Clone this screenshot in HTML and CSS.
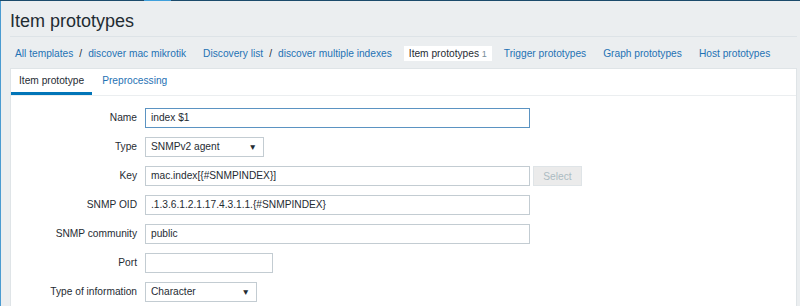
FILE: index.html
```html
<!DOCTYPE html>
<html lang="en">
<head>
  <meta charset="UTF-8">
  <meta name="viewport" content="width=device-width, initial-scale=1.0">
  <title>Item prototypes</title>
  <link rel="stylesheet" href="styles.css">
</head>
<body>
  <div class="topbar"><span class="topbar-mark"></span></div>

  <div class="page">
    <div class="header">
      <h1>Item prototypes</h1>
    </div>

    <ul class="breadcrumbs">
      <li><a href="#">All templates</a><span class="sep">/</span><a href="#">discover mac mikrotik</a></li>
      <li><a href="#">Discovery list</a><span class="sep">/</span><a href="#">discover multiple indexes</a></li>
      <li class="selected">Item prototypes <sup>1</sup></li>
      <li><a href="#">Trigger prototypes</a></li>
      <li><a href="#">Graph prototypes</a></li>
      <li><a href="#">Host prototypes</a></li>
    </ul>

    <div class="card">
      <ul class="tabs">
        <li class="active">Item prototype</li>
        <li><a href="#">Preprocessing</a></li>
      </ul>

      <div class="form">
        <label>Name</label>
        <div class="field"><div class="input focused w-wide">index $1</div></div>

        <label>Type</label>
        <div class="field"><div class="select w-type">SNMPv2 agent<span class="arrow">▼</span></div></div>

        <label>Key</label>
        <div class="field">
          <div class="input w-wide">mac.index[{#SNMPINDEX}]</div>
          <button class="btn-disabled">Select</button>
        </div>

        <label>SNMP OID</label>
        <div class="field"><div class="input w-wide">.1.3.6.1.2.1.17.4.3.1.1.{#SNMPINDEX}</div></div>

        <label>SNMP community</label>
        <div class="field"><div class="input w-wide">public</div></div>

        <label>Port</label>
        <div class="field"><div class="input w-port"></div></div>

        <label>Type of information</label>
        <div class="field"><div class="select w-info">Character<span class="arrow">▼</span></div></div>
      </div>
    </div>
  </div>
</body>
</html>
```

FILE: styles.css
```css
body {
  margin: 0;
  background-color: #ebeef0;
  font-family: "Liberation Sans", Arial, sans-serif;
  font-size: 10.2px;
  color: #1f2c33;
}

a {
  color: #1f72b4;
  text-decoration: none;
}

.topbar {
  height: 1px;
  background-color: #1b4a6b;
}

.topbar-mark {
  display: block;
  width: 27px;
  height: 1px;
  margin-left: 144px;
  background-color: #3fa0dc;
}

.page {
  border-left: 1px solid #4a9bd1;
  padding: 0 3px 0 9px;
  min-height: 305px;
}

.header {
  height: 35px;
  border-bottom: 1px solid #dde3e7;
}

.header h1 {
  margin: 0;
  padding-top: 9px;
  font-size: 18px;
  line-height: 22px;
  font-weight: normal;
  color: #1f2c33;
}

.breadcrumbs {
  list-style: none;
  display: flex;
  gap: 7px;
  margin: 0;
  padding: 9px 0 7px;
}

.breadcrumbs li {
  padding: 0 5px;
  height: 15px;
  line-height: 15px;
}

.breadcrumbs .sep {
  padding: 0 6px;
  color: #1f2c33;
}

.breadcrumbs .selected {
  background-color: #fff;
}

.breadcrumbs sup {
  font-size: 9px;
  color: #768d99;
  vertical-align: baseline;
}

.card {
  background-color: #fff;
  border: 1px solid #dfe4e7;
  min-height: 240px;
}

.tabs {
  list-style: none;
  display: flex;
  gap: 2px;
  margin: 0;
  padding: 0;
  border-bottom: 1px solid #ebeef0;
}

.tabs li {
  padding: 6px 8px 5px;
  line-height: 12px;
  border-bottom: 3px solid transparent;
}

.tabs .active {
  border-bottom-color: #0275b8;
}

.form {
  display: grid;
  grid-template-columns: 126px 1fr;
  column-gap: 8px;
  row-gap: 9px;
  padding: 12px 0 20px;
}

.form label {
  text-align: right;
  line-height: 20px;
}

.field {
  display: flex;
  gap: 3px;
}

.input,
.select {
  box-sizing: border-box;
  height: 20px;
  line-height: 18px;
  padding: 0 5px;
  border: 1px solid #c3ccd2;
  color: #1f2c33;
}

.input.focused {
  border-color: #5b93c2;
}

.select {
  display: flex;
  justify-content: space-between;
  padding-right: 6px;
}

.arrow {
  font-size: 8.5px;
}

.w-wide { width: 385px; }
.w-type { width: 119px; }
.w-port { width: 128px; }
.w-info { width: 112px; }

.btn-disabled {
  width: 49px;
  height: 20px;
  padding: 0;
  border: 1px solid #dfe4e7;
  background-color: #ebebeb;
  color: #acbbc2;
  font-family: inherit;
  font-size: 10.2px;
}
```
